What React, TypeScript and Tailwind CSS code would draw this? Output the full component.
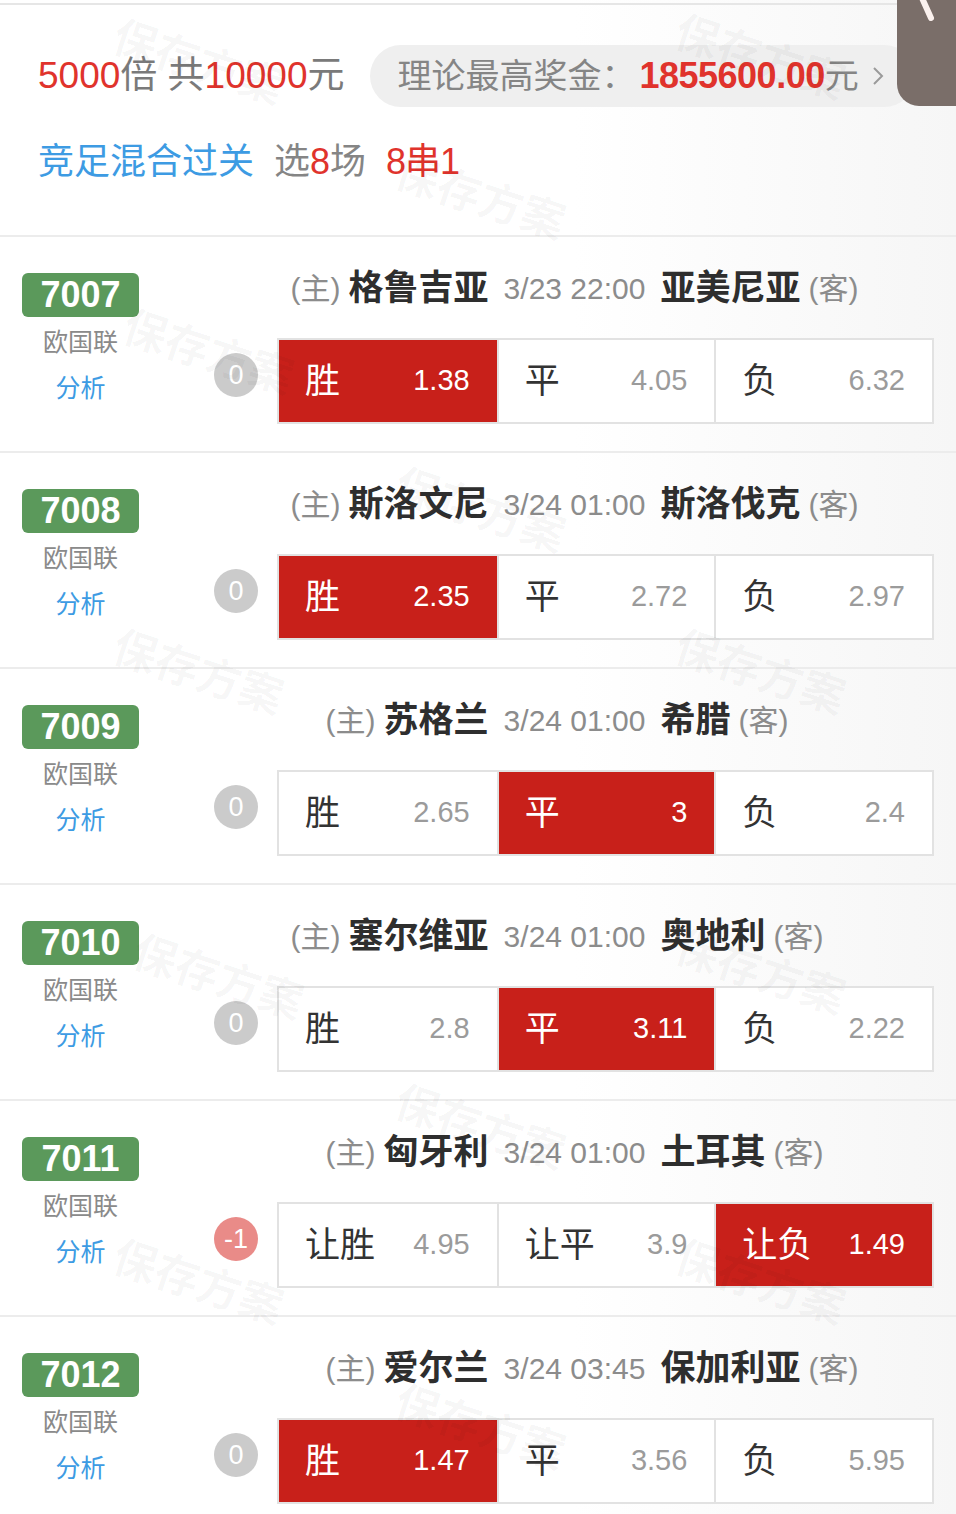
import clsx from 'clsx'

type Odd = { label: string; value: string; picked?: boolean }

type Match = {
  no: string
  league: string
  home: string
  away: string
  time: string
  handicap: string
  odds: Odd[]
}

const matches: Match[] = [
  {
    no: '7007',
    league: '欧国联',
    home: '格鲁吉亚',
    away: '亚美尼亚',
    time: '3/23 22:00',
    handicap: '0',
    odds: [
      { label: '胜', value: '1.38', picked: true },
      { label: '平', value: '4.05' },
      { label: '负', value: '6.32' },
    ],
  },
  {
    no: '7008',
    league: '欧国联',
    home: '斯洛文尼',
    away: '斯洛伐克',
    time: '3/24 01:00',
    handicap: '0',
    odds: [
      { label: '胜', value: '2.35', picked: true },
      { label: '平', value: '2.72' },
      { label: '负', value: '2.97' },
    ],
  },
  {
    no: '7009',
    league: '欧国联',
    home: '苏格兰',
    away: '希腊',
    time: '3/24 01:00',
    handicap: '0',
    odds: [
      { label: '胜', value: '2.65' },
      { label: '平', value: '3', picked: true },
      { label: '负', value: '2.4' },
    ],
  },
  {
    no: '7010',
    league: '欧国联',
    home: '塞尔维亚',
    away: '奥地利',
    time: '3/24 01:00',
    handicap: '0',
    odds: [
      { label: '胜', value: '2.8' },
      { label: '平', value: '3.11', picked: true },
      { label: '负', value: '2.22' },
    ],
  },
  {
    no: '7011',
    league: '欧国联',
    home: '匈牙利',
    away: '土耳其',
    time: '3/24 01:00',
    handicap: '-1',
    odds: [
      { label: '让胜', value: '4.95' },
      { label: '让平', value: '3.9' },
      { label: '让负', value: '1.49', picked: true },
    ],
  },
  {
    no: '7012',
    league: '欧国联',
    home: '爱尔兰',
    away: '保加利亚',
    time: '3/24 03:45',
    handicap: '0',
    odds: [
      { label: '胜', value: '1.47', picked: true },
      { label: '平', value: '3.56' },
      { label: '负', value: '5.95' },
    ],
  },
]

// faint "保存方案" stamps scattered over the page
const marks: [number, number][] = [
  [110, 30], [672, 25], [392, 165], [120, 320], [392, 478], [110, 640],
  [672, 640], [130, 945], [672, 940], [392, 1095], [110, 1250], [672, 1250], [392, 1395],
]

function MatchRow({ m }: { m: Match }) {
  return (
    <div className="flex border-t-2 border-[#ececec]">
      <div className="w-[161px] shrink-0 flex flex-col items-center pt-[36px]">
        <div className="w-[117px] h-[44px] rounded-[6px] bg-[#5b995b] text-white text-[36px] font-bold leading-[44px] text-center">
          {m.no}
        </div>
        <div className="mt-[7px] text-[25px] leading-[36px] text-[#8a8a8a]">{m.league}</div>
        <div className="mt-[10px] text-[25px] leading-[36px] text-[#3d9be3]">分析</div>
      </div>

      <div className="flex-1 pt-[31px] pb-[27px]">
        <div className="ml-[32px] h-[40px] flex items-center">
          <div className="flex-1 flex justify-end items-center gap-[8px]">
            <span className="text-[30px] text-[#8c8c8c]">(主)</span>
            <span className="text-[35px] font-bold text-[#2e2e2e]">{m.home}</span>
          </div>
          <span className="px-[15px] text-[30px] text-[#8c8c8c]">{m.time}</span>
          <div className="flex-1 flex items-center gap-[8px]">
            <span className="text-[35px] font-bold text-[#2e2e2e]">{m.away}</span>
            <span className="text-[30px] text-[#8c8c8c]">(客)</span>
          </div>
        </div>

        <div className="mt-[30px] flex items-start pr-[22px]">
          <div
            className={clsx(
              'ml-[53px] mt-[15px] w-[44px] h-[44px] rounded-full text-white text-[27px] flex items-center justify-center',
              m.handicap === '0' ? 'bg-[#cbcbcb]' : 'bg-[#e98b88]'
            )}
          >
            {m.handicap}
          </div>
          <div className="ml-[19px] flex-1 h-[86px] grid grid-cols-3 border-2 border-[#e2e2e2] bg-white">
            {m.odds.map((o, i) => (
              <div
                key={o.label}
                className={clsx(
                  'flex items-center justify-between pl-[26px] pr-[27px]',
                  i > 0 && 'border-l-2 border-[#e2e2e2]',
                  o.picked ? 'bg-[#c8201a] text-white border-[#c8201a]' : 'bg-white'
                )}
              >
                <span className={clsx('text-[35px]', !o.picked && 'text-[#333]')}>{o.label}</span>
                <span className={clsx('text-[29px]', !o.picked && 'text-[#9b9b9b]')}>{o.value}</span>
              </div>
            ))}
          </div>
        </div>
      </div>
    </div>
  )
}

export default function App() {
  return (
    <div
      className="relative w-[956px] h-[1514px] overflow-hidden bg-gradient-to-r from-white from-60% to-[#f6f6f6]"
      style={{ fontFamily: '"Liberation Sans", "Noto Sans CJK SC", sans-serif' }}
    >
      <div className="mt-[3px] border-t-2 border-[#e6e6e6] h-[232px]">
        <div className="mt-[40px] flex items-center pl-[38px]">
          <div className="text-[37px] text-[#7a7a7a] whitespace-nowrap">
            <span className="text-[#e0332c]">5000</span>倍 共<span className="text-[#e0332c]">10000</span>元
          </div>
          <div className="ml-[26px] h-[62px] pl-[27px] pr-[30px] rounded-full bg-[#efefef] flex items-center whitespace-nowrap">
            <span className="text-[34px] text-[#858585]">理论最高奖金：</span>
            <span className="ml-[4px] text-[36px] font-bold text-[#e0332c] tracking-[-0.5px]">1855600.00</span>
            <span className="text-[34px] text-[#858585]">元</span>
            <svg width="14" height="22" viewBox="0 0 14 22" className="ml-[12px]">
              <path d="M3 3l8 8-8 8" fill="none" stroke="#9a9a9a" strokeWidth="2" />
            </svg>
          </div>
        </div>
        <div className="mt-[35px] pl-[38px] flex items-center h-[40px] text-[36px] whitespace-nowrap">
          <span className="text-[#3d9be3]">竞足混合过关</span>
          <span className="ml-[20px] text-[#858585]">
            选<span className="text-[#e0332c]">8</span>场
          </span>
          <span className="ml-[20px] text-[#e0332c] tracking-[-1px]">8串1</span>
        </div>
      </div>

      {matches.map((m) => (
        <MatchRow key={m.no} m={m} />
      ))}

      {marks.map(([x, y]) => (
        <div
          key={`${x}-${y}`}
          className="absolute pointer-events-none text-[44px] font-bold text-black/[0.035] rotate-[18deg] whitespace-nowrap"
          style={{ left: x, top: y }}
        >
          保存方案
        </div>
      ))}

      <div className="absolute top-0 right-0 w-[59px] h-[106px] bg-[#7a6e69] rounded-bl-[22px]">
        <svg width="59" height="30" viewBox="0 0 59 30" className="absolute top-0 left-0">
          <path d="M25 -2l9 20" stroke="#fbf1ee" strokeWidth="6" strokeLinecap="round" />
        </svg>
      </div>
    </div>
  )
}
